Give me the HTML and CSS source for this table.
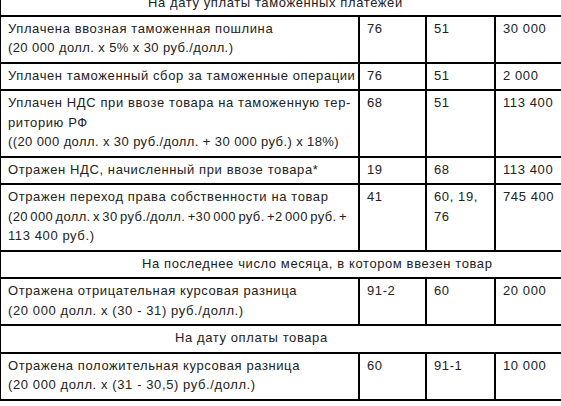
FILE: index.html
```html
<!DOCTYPE html>
<html lang="ru">
<head>
<meta charset="utf-8">
<link rel="stylesheet" href="styles.css">
</head>
<body>
<table class="ledger">
<colgroup>
<col class="c-desc"><col class="c-dt"><col class="c-kt"><col class="c-sum">
</colgroup>
<tbody>
<tr class="section"><td colspan="4" class="sec-1">На дату уплаты таможенных платежей</td></tr>
<tr><td>Уплачена ввозная таможенная пошлина<br><span class="tight">(20 000 долл. х 5% х 30 руб./долл.)</span></td><td>76</td><td>51</td><td>30 000</td></tr>
<tr><td>Уплачен таможенный сбор за таможенные операции</td><td>76</td><td>51</td><td>2 000</td></tr>
<tr><td>Уплачен НДС при ввозе товара на таможенную тер-<br>риторию РФ<br><span class="tight">((20 000 долл. х 30 руб./долл. + 30 000 руб.) х 18%)</span></td><td>68</td><td>51</td><td>113 400</td></tr>
<tr><td>Отражен НДС, начисленный при ввозе товара*</td><td>19</td><td>68</td><td>113 400</td></tr>
<tr><td>Отражен переход права собственности на товар<br><span class="tighter">(20 000 долл. х 30 руб./долл. +30 000 руб. +2 000 руб. +</span><br>113 400 руб.)</td><td>41</td><td>60, 19,<br>76</td><td>745 400</td></tr>
<tr class="section"><td colspan="4" class="sec-2">На последнее число месяца, в котором ввезен товар</td></tr>
<tr><td>Отражена отрицательная курсовая разница<br>(20 000 долл. х (30 - 31) руб./долл.)</td><td>91-2</td><td>60</td><td>20 000</td></tr>
<tr class="section"><td colspan="4" class="sec-3">На дату оплаты товара</td></tr>
<tr><td>Отражена положительная курсовая разница<br>(20 000 долл. х (31 - 30,5) руб./долл.)</td><td>60</td><td>91-1</td><td>10 000</td></tr>
</tbody>
</table>
</body>
</html>
```
FILE: styles.css
```css
html, body {
  margin: 0;
  padding: 0;
  background: #fff;
  overflow: hidden;
}
.ledger {
  border-collapse: collapse;
  table-layout: fixed;
  width: 576px;
  margin-left: -1px;
  margin-top: -11px;
  font-family: "Liberation Sans", Arial, sans-serif;
  font-size: 13px;
  letter-spacing: 0.6px;
  line-height: 19.5px;
  color: #222;
}
.c-desc { width: 359px; }
.c-dt { width: 67px; }
.c-kt { width: 69px; }
.c-sum { width: 81px; }
.ledger td {
  border: 2px solid #000;
  padding: 2px 4px 4px 7px;
  vertical-align: top;
  white-space: nowrap;
}
.ledger .sec-1 { padding-left: 147px; padding-bottom: 2px; }
.ledger .sec-2 { padding-left: 141px; }
.ledger .sec-3 { padding-left: 174px; }
.tight {
  letter-spacing: 0.4px;
}
.tighter {
  letter-spacing: 0.35px;
  word-spacing: -1.5px;
}
```
